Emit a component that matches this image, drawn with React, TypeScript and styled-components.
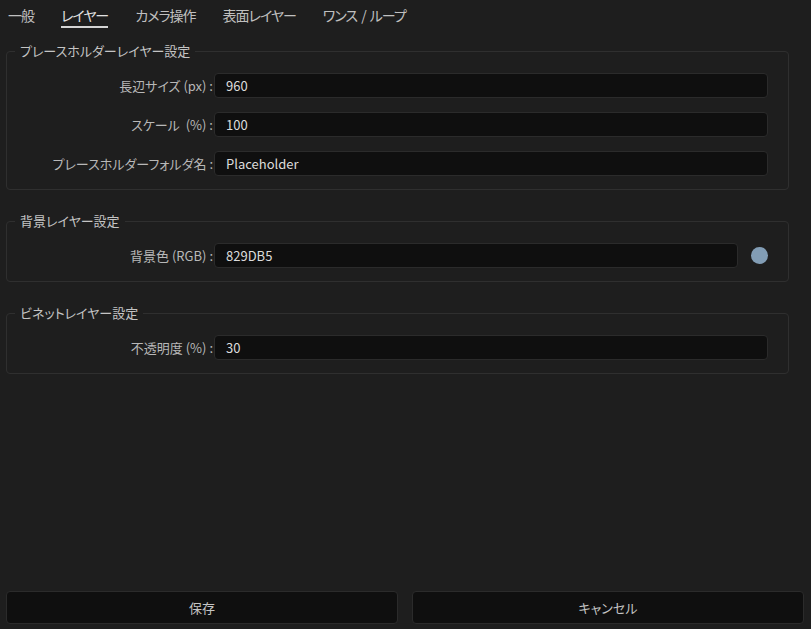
import * as React from "react";
import styled, { createGlobalStyle } from "styled-components";

const GlobalStyle = createGlobalStyle`
  html, body {
    margin: 0;
    padding: 0;
    background: #1e1e1e;
  }
  body {
    font-family: "Noto Sans CJK JP", "Noto Sans", sans-serif;
    font-feature-settings: "palt";
    color: #c8c8c8;
  }
`;

const Page = styled.div`
  height: 100vh;
  display: flex;
  flex-direction: column;
  box-sizing: border-box;
`;

const TabBar = styled.div`
  display: flex;
  gap: 27px;
  padding: 0 8px;
  height: 30px;
  align-items: stretch;
`;

const Tab = styled.div<{ $active?: boolean }>`
  font-size: 14px;
  line-height: 30px;
  letter-spacing: -1px;
  word-spacing: 2px;
  color: ${(p) => (p.$active ? "#e2e2e2" : "#c0c0c0")};
  position: relative;
  white-space: pre;

  &::after {
    content: "";
    display: ${(p) => (p.$active ? "block" : "none")};
    position: absolute;
    left: 0;
    right: 0;
    bottom: 2px;
    height: 2px;
    background: #d4d4d4;
  }
`;

const Content = styled.div`
  flex: 1;
  padding: 14px 22px 0 6px;
  display: flex;
  flex-direction: column;
  gap: 24px;
`;

const Group = styled.fieldset`
  margin: 0;
  padding: 15px 20px 13px 0;
  border: 1px solid #2f2f2f;
  border-radius: 4px;
  display: flex;
  flex-direction: column;
  gap: 14px;
  min-width: 0;
`;

const Legend = styled.legend`
  font-size: 13px;
  line-height: 14px;
  margin-left: 8px;
  padding: 0 5px;
  color: #c4c4c4;
`;

const Row = styled.div`
  display: grid;
  grid-template-columns: 207px 1fr;
  align-items: center;
`;

const Label = styled.label`
  font-size: 13px;
  text-align: right;
  color: #b8b8b8;
  white-space: nowrap;
  padding-right: 1px;
`;

const Field = styled.div`
  display: flex;
  align-items: center;
  gap: 13px;
`;

const Input = styled.div`
  flex: 1;
  height: 25px;
  box-sizing: border-box;
  background: #0f0f0f;
  border: 1px solid #2b2b2b;
  border-radius: 4px;
  padding-left: 11px;
  font-size: 13px;
  line-height: 23px;
  color: #dcdcdc;
`;

const Swatch = styled.div<{ $color: string }>`
  width: 17px;
  height: 17px;
  border-radius: 50%;
  background: ${(p) => p.$color};
`;

const Footer = styled.div`
  display: flex;
  gap: 14px;
  padding: 0 7px 5px 6px;
`;

const Button = styled.button`
  flex: 1;
  height: 33px;
  background: #0f0f0f;
  border: 1px solid #2b2b2b;
  border-radius: 4px;
  font-family: inherit;
  font-feature-settings: "palt";
  font-size: 13px;
  color: #c4c4c4;
`;

const tabs = ["一般", "レイヤー", "カメラ操作", "表面レイヤー", "ワンス / ループ"];

const App = () => {
  return (
    <Page>
      <GlobalStyle />
      <TabBar>
        {tabs.map((t, i) => (
          <Tab key={t} $active={i === 1}>
            {t}
          </Tab>
        ))}
      </TabBar>
      <Content>
        <Group>
          <Legend>プレースホルダーレイヤー設定</Legend>
          <Row>
            <Label>長辺サイズ (px) :</Label>
            <Input>960</Input>
          </Row>
          <Row>
            <Label>スケール &nbsp;(%) :</Label>
            <Input>100</Input>
          </Row>
          <Row>
            <Label>プレースホルダーフォルダ名 :</Label>
            <Input>Placeholder</Input>
          </Row>
        </Group>
        <Group>
          <Legend>背景レイヤー設定</Legend>
          <Row>
            <Label>背景色 (RGB) :</Label>
            <Field>
              <Input>829DB5</Input>
              <Swatch $color="#829DB5" />
            </Field>
          </Row>
        </Group>
        <Group>
          <Legend>ビネットレイヤー設定</Legend>
          <Row>
            <Label>不透明度 (%) :</Label>
            <Input>30</Input>
          </Row>
        </Group>
      </Content>
      <Footer>
        <Button>保存</Button>
        <Button>キャンセル</Button>
      </Footer>
    </Page>
  );
};

export default App;
